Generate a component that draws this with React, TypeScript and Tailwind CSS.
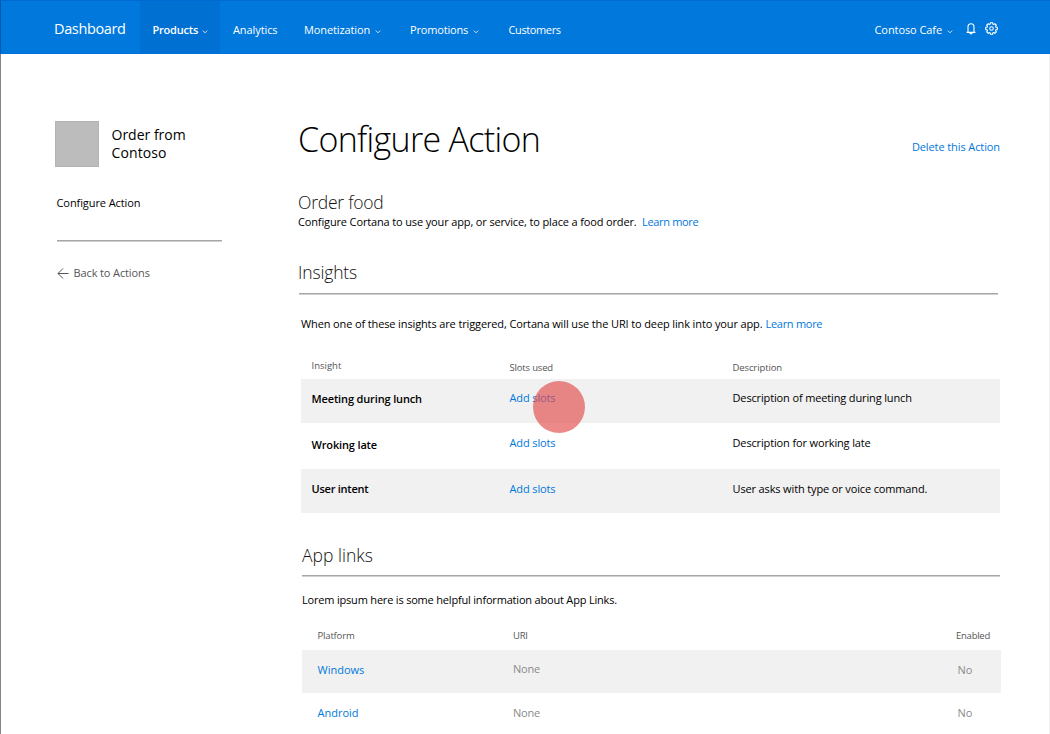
import React from "react";

function Chevron({ className = "" }: { className?: string }) {
  return (
    <svg viewBox="0 0 6 4" className={`h-[4px] w-[6px] ${className}`} fill="none" stroke="currentColor" strokeWidth="0.8">
      <path d="M0.8 0.6 L3 2.8 L5.2 0.6" />
    </svg>
  );
}

function Bell() {
  return (
    <svg viewBox="0 0 10 12" className="h-[12px] w-[10px]" fill="none" stroke="currentColor" strokeWidth="1.1">
      <path d="M2 9.3 V4 C2 1.9 3.2 0.8 5 0.8 C6.8 0.8 8 1.9 8 4 V9.3 M0.6 9.4 H9.4" />
      <path d="M3.8 9.8 C3.9 11.2 6.1 11.2 6.2 9.8" />
    </svg>
  );
}

function Gear() {
  const teeth = 8;
  const points: string[] = [];
  for (let i = 0; i < teeth; i++) {
    const base = (i * 2 * Math.PI) / teeth;
    [
      [-0.26, 4.6],
      [-0.2, 5.9],
      [0.2, 5.9],
      [0.26, 4.6],
    ].forEach(([a, r]) => {
      points.push(`${(6.5 + r * Math.sin(base + a)).toFixed(2)},${(6.5 - r * Math.cos(base + a)).toFixed(2)}`);
    });
  }
  return (
    <svg viewBox="0 0 13 13" className="h-[13px] w-[13px]" fill="none" stroke="currentColor" strokeWidth="1.05" strokeLinejoin="round">
      <polygon points={points.join(" ")} />
      <circle cx="6.5" cy="6.5" r="1.8" />
    </svg>
  );
}

function BackArrow() {
  return (
    <svg viewBox="0 0 12 12" className="h-[12px] w-[12px]" fill="none" stroke="#555" strokeWidth="1">
      <path d="M11.6 6.5 H1 M6 1.5 L1 6.5 L6 11.5" />
    </svg>
  );
}

const insights = [
  {
    name: "Meeting during lunch",
    nameClass: "tracking-[-0.14px] mt-[12px]",
    slotsClass: "mt-[11px]",
    description: "Description of meeting during lunch",
    rowClass: "h-[44px] bg-[#f1f1f1]",
  },
  {
    name: "Wroking late",
    nameClass: "tracking-[-0.15px] mt-[14px]",
    slotsClass: "mt-[12px]",
    description: "Description for working late",
    rowClass: "h-[46px]",
  },
  {
    name: "User intent",
    nameClass: "tracking-[-0.24px] mt-[12px]",
    slotsClass: "mt-[12px]",
    description: "User asks with type or voice command.",
    rowClass: "h-[44px] bg-[#f1f1f1]",
  },
];

const insightGrid = "grid grid-cols-[198px_223px_1fr] pl-[10.5px]";
const platformGrid = "grid grid-cols-[195.5px_443px_1fr] pl-[15.5px]";

export default function App() {
  return (
    <div className="flex h-[734px] w-[1050px] flex-col overflow-hidden bg-white font-['Open_Sans',sans-serif] text-[11px] leading-4 whitespace-nowrap text-black">
      <header className="flex h-[54px] shrink-0 border-t border-b border-l border-t-[#006ad4] border-b-[#006fd6] border-l-[#0059ae] bg-[#0078dc] text-white">
        <div className="mt-[19px] w-[139px] pl-[53px] text-[14.5px] leading-[18px] tracking-[-0.37px]">Dashboard</div>
        <nav className="flex flex-1">
          <a className="flex w-[80px] bg-[#0070d3] pt-[21px] pl-[12.5px] font-semibold tracking-[-0.2px]">
            Products
            <Chevron className="mt-[8px] ml-[4px]" />
          </a>
          <a className="w-[71px] pt-[21px] pl-[13px] tracking-[-0.09px]">Analytics</a>
          <a className="flex w-[106px] pt-[21px] pl-[13px] tracking-[-0.12px]">
            Monetization
            <Chevron className="mt-[8px] ml-[4.5px]" />
          </a>
          <a className="flex w-[98px] pt-[21px] pl-[13px] tracking-[-0.17px]">
            Promotions
            <Chevron className="mt-[8px] ml-[5px]" />
          </a>
          <a className="pt-[21px] pl-[13.5px] tracking-[-0.38px]">Customers</a>
        </nav>
        <div className="flex w-[175.5px] pt-[21px] tracking-[-0.08px]">
          Contoso Cafe
          <Chevron className="mt-[8px] ml-[5px]" />
          <span className="mt-[1px] ml-[12.5px]">
            <Bell />
          </span>
          <span className="ml-[9px]">
            <Gear />
          </span>
        </div>
      </header>

      <div className="flex flex-1 border-r border-l border-r-[#f0f0f0] border-l-[#858585]">
        <aside className="w-[297px] pt-[67px] pl-[54px]">
          <div className="flex">
            <div className="h-[46px] w-[44px] border border-[#b3b3b3] bg-[#bcbcbc]" />
            <div className="mt-[5px] ml-[12.5px] text-[14px] leading-[18px]">
              <div>Order from</div>
              <div className="tracking-[0.1px]">Contoso</div>
            </div>
          </div>
          <div className="mt-[28px] ml-[1.5px] tracking-[-0.08px]">Configure Action</div>
          <div className="mt-[29px] ml-[2px] h-[2px] w-[165px] border-t border-[#a6a6a6] bg-[#d0d0d0]" />
          <a className="mt-[23px] ml-[2px] flex text-[#555]">
            <span className="mt-[2px]">
              <BackArrow />
            </span>
            <span className="ml-[4.5px] tracking-[-0.12px]">Back to Actions</span>
          </a>
        </aside>

        <main className="w-[703px]">
          <div className="flex h-[48px] w-[702px] justify-between">
            <h1 className="mt-[63px] text-[34px] leading-[44px] font-light tracking-[-0.69px]">Configure Action</h1>
            <a className="mt-[85px] tracking-[-0.1px] text-[#0078dc]">Delete this Action</a>
          </div>
          <h2 className="mt-[90px] text-[17.5px] leading-5 font-[340] tracking-[-0.22px] text-[#111]">Order food</h2>
          <p className="mt-[2px]">
            <span className="tracking-[-0.14px]">Configure Cortana to use your app, or service, to place a food order.</span>
            <a className="ml-[5.5px] tracking-[-0.34px] text-[#0078dc]">Learn more</a>
          </p>
          <h2 className="mt-[32px] text-[17.5px] leading-5 font-[340] tracking-[-0.16px] text-[#111]">Insights</h2>
          <div className="mt-[11px] ml-px h-[2px] w-[699px] border-t border-[#a6a6a6] bg-[#d0d0d0]" />

          <section className="ml-[3px]">
            <p className="mt-[21px]">
              <span className="tracking-[-0.126px]">
                When one of these insights are triggered, Cortana will use the URI to deep link into your app.
              </span>
              <a className="ml-[3px] tracking-[-0.28px] text-[#0078dc]">Learn more</a>
            </p>
            <div className={`${insightGrid} mt-[26px] h-[21px] text-[9.5px] text-[#555]`}>
              <span>Insight</span>
              <span className="mt-[2px] tracking-[-0.17px]">Slots used</span>
              <span className="mt-[2px] tracking-[-0.11px]">Description</span>
            </div>
            <div className="relative w-[699px]">
              {insights.map((row) => (
                <div key={row.name} className={`${insightGrid} ${row.rowClass}`}>
                  <span className={`font-semibold ${row.nameClass}`}>{row.name}</span>
                  <a className={`tracking-[-0.12px] text-[#0078dc] ${row.slotsClass}`}>Add slots</a>
                  <span className={`tracking-[-0.14px] ${row.slotsClass}`}>{row.description}</span>
                </div>
              ))}
              <div className="absolute top-[2px] left-[232px] h-[52px] w-[52px] rounded-full bg-[#e24b4b]/65" />
            </div>
          </section>

          <section className="ml-[4px]">
            <h2 className="mt-[32px] text-[17.5px] leading-5 font-[340] tracking-[0.03px] text-[#111]">App links</h2>
            <div className="mt-[10px] h-[2px] w-[698px] border-t border-[#a6a6a6] bg-[#d0d0d0]" />
            <p className="mt-[15px] tracking-[-0.19px]">Lorem ipsum here is some helpful information about App Links.</p>
            <div className={`${platformGrid} mt-[20px] h-[22px] w-[699px] text-[9.5px] text-[#555]`}>
              <span className="tracking-[-0.17px]">Platform</span>
              <span className="tracking-[-0.3px]">URI</span>
              <span className="tracking-[-0.25px]">Enabled</span>
            </div>
            <div className={`${platformGrid} h-[43px] w-[699px] bg-[#f1f1f1] text-[#8a8a8a]`}>
              <a className="mt-[12px] text-[#0078dc]">Windows</a>
              <span className="mt-[11px] tracking-[-0.2px]">None</span>
              <span className="mt-[12px] pl-[1.5px]">No</span>
            </div>
            <div className={`${platformGrid} h-[41px] w-[699px] text-[#8a8a8a]`}>
              <a className="mt-[12px] text-[#0078dc]">Android</a>
              <span className="mt-[12px] tracking-[-0.2px]">None</span>
              <span className="mt-[12px] pl-[1.5px]">No</span>
            </div>
          </section>
        </main>
      </div>
    </div>
  );
}
